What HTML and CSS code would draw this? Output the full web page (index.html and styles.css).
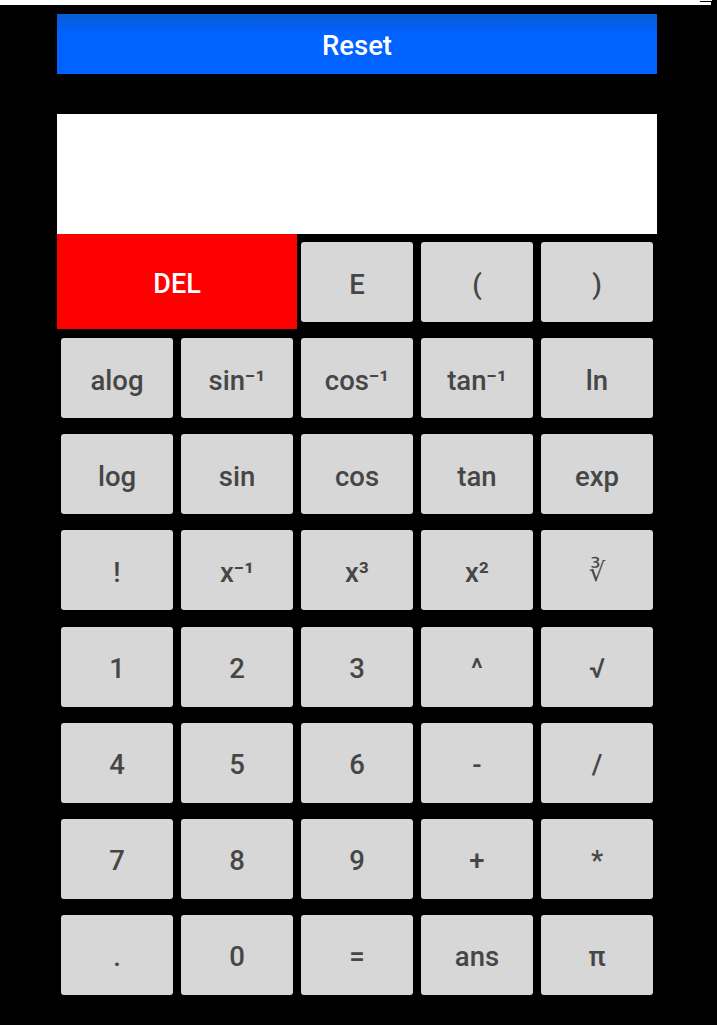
FILE: index.html
```html
<!DOCTYPE html>
<html>
<head>
<meta charset="utf-8">
<link rel="stylesheet" href="styles.css">
</head>
<body>
<div class="topbar"><span class="tick"></span></div>
<div class="app">
  <div class="reset">Reset</div>
  <div class="display"></div>
  <div class="keys">
    <div class="del">DEL</div>
    <div class="cell"><div class="key">E</div></div>
    <div class="cell"><div class="key">(</div></div>
    <div class="cell"><div class="key">)</div></div>

    <div class="cell"><div class="key">alog</div></div>
    <div class="cell"><div class="key">sin⁻¹</div></div>
    <div class="cell"><div class="key">cos⁻¹</div></div>
    <div class="cell"><div class="key">tan⁻¹</div></div>
    <div class="cell"><div class="key">ln</div></div>

    <div class="cell"><div class="key">log</div></div>
    <div class="cell"><div class="key">sin</div></div>
    <div class="cell"><div class="key">cos</div></div>
    <div class="cell"><div class="key">tan</div></div>
    <div class="cell"><div class="key">exp</div></div>

    <div class="cell"><div class="key">!</div></div>
    <div class="cell"><div class="key">x⁻¹</div></div>
    <div class="cell"><div class="key">x³</div></div>
    <div class="cell"><div class="key">x²</div></div>
    <div class="cell"><div class="key small">∛</div></div>

    <div class="cell"><div class="key">1</div></div>
    <div class="cell"><div class="key">2</div></div>
    <div class="cell"><div class="key">3</div></div>
    <div class="cell"><div class="key">^</div></div>
    <div class="cell"><div class="key">√</div></div>

    <div class="cell"><div class="key">4</div></div>
    <div class="cell"><div class="key">5</div></div>
    <div class="cell"><div class="key">6</div></div>
    <div class="cell"><div class="key">-</div></div>
    <div class="cell"><div class="key">/</div></div>

    <div class="cell"><div class="key">7</div></div>
    <div class="cell"><div class="key">8</div></div>
    <div class="cell"><div class="key">9</div></div>
    <div class="cell"><div class="key">+</div></div>
    <div class="cell"><div class="key">*</div></div>

    <div class="cell"><div class="key">.</div></div>
    <div class="cell"><div class="key">0</div></div>
    <div class="cell"><div class="key">=</div></div>
    <div class="cell"><div class="key">ans</div></div>
    <div class="cell"><div class="key">π</div></div>
  </div>
</div>
</body>
</html>
```
FILE: styles.css
```css
html, body {
  margin: 0;
  padding: 0;
  background: #000;
  height: 1025px;
  overflow: hidden;
  font-family: Roboto, "Noto Sans", "DejaVu Sans", sans-serif;
}
.topbar {
  position: relative;
  height: 5px;
  width: 712px;
  background: #fff;
}
.tick {
  position: absolute;
  left: 700px;
  top: 1px;
  width: 11px;
  height: 4px;
  border-top: 1px solid #000;
  border-right: 1px solid #000;
}
.app {
  width: 600px;
  margin-left: 57px;
  padding-top: 9px;
}
.reset {
  height: 60px;
  padding-top: 3px;
  box-sizing: border-box;
  background: linear-gradient(to bottom, #0a5cd6 0%, #0062ff 35%, #0062ff 100%);
  color: #fff;
  font-size: 27.5px;
  font-weight: 500;
  display: flex;
  align-items: center;
  justify-content: center;
}
.display {
  margin-top: 40px;
  height: 120px;
  background: #fff;
}
.keys {
  display: grid;
  grid-template-columns: repeat(5, 120px);
  grid-auto-rows: 96.15px;
}
.del {
  grid-column: span 2;
  height: 95px;
  padding-top: 4px;
  box-sizing: border-box;
  background: #ff0000;
  color: #fff;
  font-size: 27px;
  font-weight: 500;
  display: flex;
  align-items: center;
  justify-content: center;
}
.cell {
  padding: 8px 4px;
}
.key {
  height: 80px;
  padding-top: 4px;
  box-sizing: border-box;
  background: #d6d7d6;
  border-radius: 3px;
  color: #464646;
  font-size: 27.5px;
  font-weight: 500;
  display: flex;
  align-items: center;
  justify-content: center;
}
.key.small {
  font-size: 26px;
}
```
